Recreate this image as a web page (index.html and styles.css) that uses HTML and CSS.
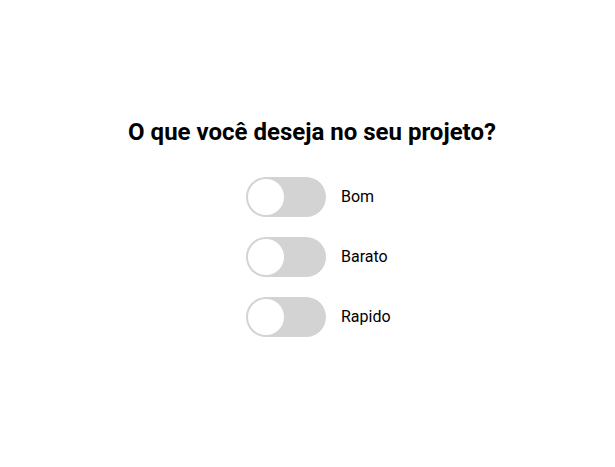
FILE: index.html
```html
<!DOCTYPE html>
<html lang="pt">
<head>
<meta charset="utf-8">
<link rel="stylesheet" href="styles.css">
</head>
<body>
<main class="page">
  <h1 class="title">O que você deseja no seu projeto?</h1>
  <div class="options">
    <label class="option">
      <span class="switch"><span class="knob"></span></span>
      <span class="label">Bom</span>
    </label>
    <label class="option">
      <span class="switch"><span class="knob"></span></span>
      <span class="label">Barato</span>
    </label>
    <label class="option">
      <span class="switch"><span class="knob"></span></span>
      <span class="label">Rapido</span>
    </label>
  </div>
</main>
</body>
</html>
```
FILE: styles.css
```css
html, body {
  margin: 0;
  padding: 0;
  background: #fff;
}
body {
  font-family: Roboto, "Liberation Sans", sans-serif;
  color: #000;
}
.page {
  display: flex;
  flex-direction: column;
  align-items: center;
  padding-top: 116px;
}
.title {
  margin: 0 0 0 9px;
  font-size: 24px;
  font-weight: 700;
  line-height: 32px;
}
.options {
  display: flex;
  flex-direction: column;
  gap: 20px;
  margin-top: 29px;
  width: 145px;
  margin-left: 22px;
}
.option {
  display: flex;
  align-items: center;
  gap: 15px;
}
.switch {
  width: 80px;
  height: 40px;
  border-radius: 20px;
  background: #d3d3d3;
  padding: 2px;
  box-sizing: border-box;
  display: flex;
  align-items: center;
}
.knob {
  width: 36px;
  height: 36px;
  border-radius: 50%;
  background: #fff;
}
.label {
  font-size: 16px;
  margin-bottom: 2px;
}
```
